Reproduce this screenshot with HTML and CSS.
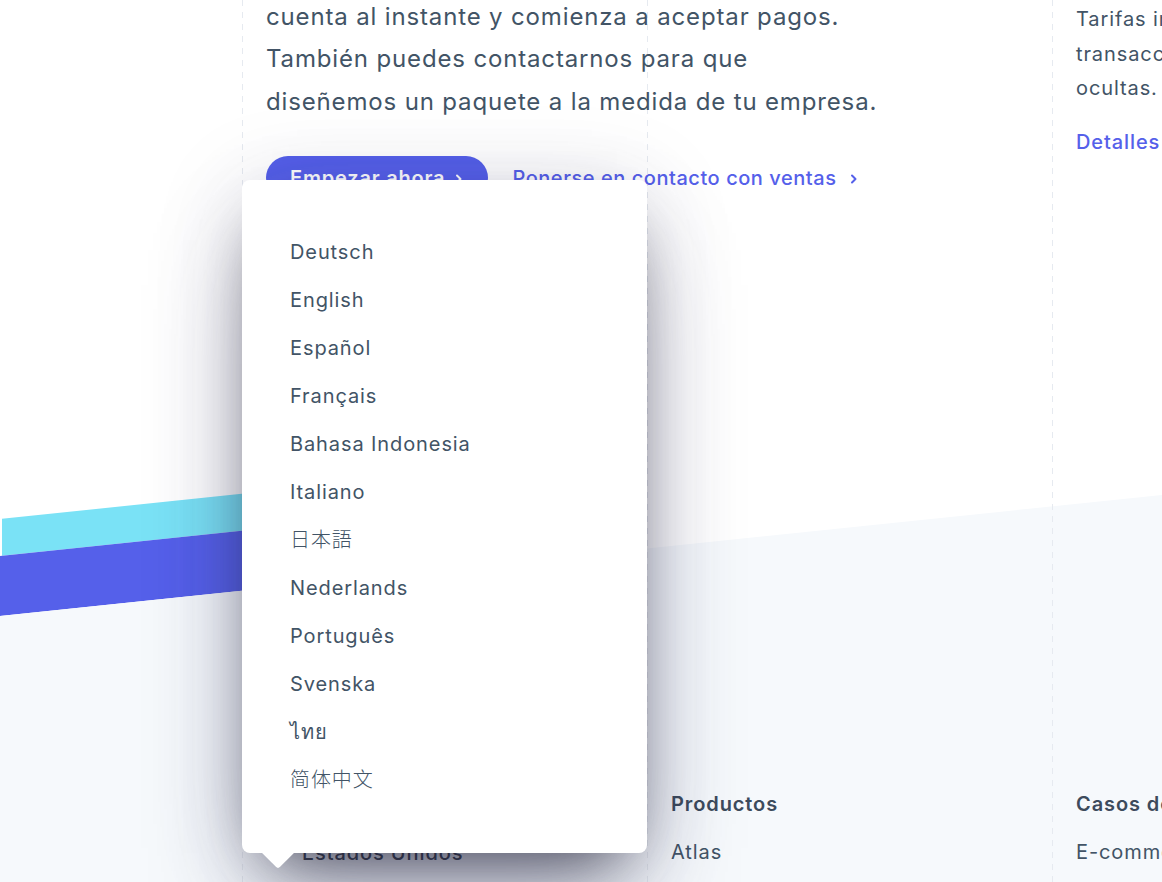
FILE: index.html
```html
<!DOCTYPE html>
<html lang="es">
<head>
<meta charset="utf-8">
<title>Precios</title>
<link rel="stylesheet" href="styles.css">
</head>
<body>
<div class="page">
  <div class="backdrop">
    <div class="stripe stripe-cyan"></div>
    <div class="stripe stripe-blue"></div>
    <div class="backdrop-fill"></div>
  </div>

  <div class="grid">
    <div class="hero">
      <p class="hero-text">cuenta al instante y comienza a aceptar pagos. También puedes contactarnos para que<br>diseñemos un paquete a la medida de tu empresa.</p>
      <div class="actions">
        <a class="btn" href="#">Empezar ahora
          <svg class="chev" viewBox="0 0 10 10" width="10" height="10"><path d="M3 1.5 6.5 5 3 8.5" fill="none" stroke="currentColor" stroke-width="2" stroke-linecap="round" stroke-linejoin="round"/></svg>
        </a>
        <a class="link" href="#">Ponerse en contacto con ventas
          <svg class="chev" viewBox="0 0 10 10" width="10" height="10"><path d="M3 1.5 6.5 5 3 8.5" fill="none" stroke="currentColor" stroke-width="2" stroke-linecap="round" stroke-linejoin="round"/></svg>
        </a>
      </div>
    </div>
    <div class="side">
      <p class="side-text">Tarifas integradas por transacción, sin cuotas ocultas.</p>
      <a class="side-link" href="#">Detalles de precios</a>
    </div>

    <div class="foot foot-locale">
      <div class="locale">
        <svg class="globe" viewBox="0 0 16 16" width="18" height="18"><circle cx="8" cy="8" r="6.5" fill="none" stroke="currentColor" stroke-width="1.5"/><path d="M1.5 8h13M8 1.5c2 2 2.6 4 2.6 6.5S10 12.5 8 14.5M8 1.5C6 3.5 5.4 5.5 5.4 8s.6 4.5 2.6 6.5" fill="none" stroke="currentColor" stroke-width="1.5"/></svg>
        <span>Estados Unidos</span>
      </div>
    </div>
    <div class="foot foot-products">
      <h4 class="foot-title">Productos</h4>
      <a class="foot-link" href="#">Atlas</a>
    </div>
    <div class="foot foot-cases">
      <h4 class="foot-title">Casos de uso</h4>
      <a class="foot-link" href="#">E-commerce</a>
    </div>
  </div>

  <div class="menu">
    <ul class="menu-list">
      <li>Deutsch</li>
      <li>English</li>
      <li>Español</li>
      <li>Français</li>
      <li>Bahasa Indonesia</li>
      <li>Italiano</li>
      <li lang="ja">日本語</li>
      <li>Nederlands</li>
      <li>Português</li>
      <li>Svenska</li>
      <li lang="th">ไทย</li>
      <li lang="zh-CN">简体中文</li>
    </ul>
  </div>
</div>
</body>
</html>
```

FILE: styles.css
```css
* { box-sizing: border-box; }

html, body {
  margin: 0;
  padding: 0;
  background: #ffffff;
}

body {
  font-family: Inter, "Noto Sans", "Noto Sans CJK JP", sans-serif;
  color: #425466;
  letter-spacing: 0.9px;
  -webkit-font-smoothing: antialiased;
}

.page {
  position: relative;
  width: 1162px;
  height: 882px;
  overflow: hidden;
  background: #ffffff;
}

/* decorative skewed background with stripes */
.backdrop {
  position: absolute;
  left: 0;
  top: 519px;
  width: 1162px;
  height: 600px;
  transform: skewY(-5.95deg);
  transform-origin: 0 0;
  display: flex;
  flex-direction: column;
  z-index: 0;
}

.stripe {
  width: 420px;
  flex: none;
}

.stripe-cyan {
  height: 37px;
  background: #7ae2f6;
  margin-left: 2px;
}

.stripe-blue {
  height: 60px;
  background: #5560ea;
}

.backdrop-fill {
  flex: 1;
  background: #f6f9fc;
}

/* layout grid with dashed guides */
.grid {
  position: relative;
  z-index: 1;
  display: grid;
  grid-template-columns: 242px 405px 405px 405px;
  grid-template-rows: 780px auto;
  width: 1457px;
  height: 882px;
  background-image:
    repeating-linear-gradient(to bottom, #e6eaf0 0 6px, transparent 6px 12px),
    repeating-linear-gradient(to bottom, #e6eaf0 0 6px, transparent 6px 12px),
    repeating-linear-gradient(to bottom, #e6eaf0 0 6px, transparent 6px 12px);
  background-size: 1px 100%;
  background-repeat: no-repeat;
  background-position: 242px 0, 647px 0, 1052px 0;
}

.hero {
  grid-column: 2 / span 2;
  grid-row: 1;
  padding: 0 24px;
}

.hero-text {
  margin: -4.5px 0 0;
  width: 640px;
  font-size: 24px;
  line-height: 42.67px;
  letter-spacing: 0.85px;
  color: #425466;
}

.actions {
  display: flex;
  align-items: center;
  gap: 24px;
  margin-top: 32px;
}

.btn {
  display: inline-flex;
  align-items: center;
  gap: 9px;
  height: 44px;
  padding: 0 24px;
  border-radius: 22px;
  background: #5560ea;
  color: #ffffff;
  font-size: 20px;
  font-weight: 600;
  letter-spacing: 0.8px;
  text-decoration: none;
}

.link {
  display: inline-flex;
  align-items: center;
  gap: 12px;
  color: #5560ea;
  font-size: 20px;
  font-weight: 500;
  letter-spacing: 0.55px;
  text-decoration: none;
}

.chev {
  flex: none;
  margin-top: 2px;
}

.side {
  grid-column: 4;
  grid-row: 1;
  padding: 2px 24px 0;
}

.side-text {
  margin: 0;
  width: 280px;
  font-size: 20px;
  line-height: 34.67px;
  color: #425466;
}

.side-link {
  display: block;
  margin-top: 19px;
  font-size: 20px;
  line-height: 34.67px;
  font-weight: 500;
  color: #5560ea;
  text-decoration: none;
}

.foot {
  grid-row: 2;
  padding: 0 24px;
}

.foot-locale {
  grid-column: 2;
}

.foot-products {
  grid-column: 3;
}

.foot-cases {
  grid-column: 4;
}

.locale {
  display: flex;
  align-items: center;
  gap: 18px;
  margin-top: 49px;
  height: 48px;
  font-size: 20px;
  font-weight: 500;
  color: #3c4452;
}

.globe {
  color: #3c4452;
}

.foot-title {
  margin: 0;
  font-size: 20px;
  line-height: 48px;
  font-weight: 600;
  color: #3d4b5c;
}

.foot-link {
  display: block;
  font-size: 20px;
  line-height: 48px;
  color: #425466;
  text-decoration: none;
}

/* language dropdown */
.menu {
  position: absolute;
  left: 242px;
  top: 180px;
  width: 405px;
  height: 673px;
  z-index: 5;
  background: #ffffff;
  border-radius: 8px;
  box-shadow:
    0 50px 100px -20px rgba(50, 50, 93, 0.42),
    0 30px 60px -30px rgba(0, 0, 0, 0.65),
    0 10px 90px 0 rgba(50, 50, 93, 0.15);
}

.menu::after {
  content: "";
  position: absolute;
  left: 24px;
  bottom: -11px;
  width: 24px;
  height: 24px;
  background: #ffffff;
  transform: rotate(45deg);
  border-radius: 0 0 3px 0;
}

.menu-list {
  list-style: none;
  margin: 0;
  padding: 48px 0 0 48px;
}

.menu-list li {
  height: 48px;
  line-height: 48px;
  font-size: 20px;
  color: #425466;
}

.menu-list li[lang="ja"] {
  font-family: Inter, "Noto Sans CJK JP", sans-serif;
  font-weight: 300;
}

.menu-list li[lang="zh-CN"] {
  font-family: Inter, "Noto Sans CJK SC", sans-serif;
  font-weight: 300;
}
```
